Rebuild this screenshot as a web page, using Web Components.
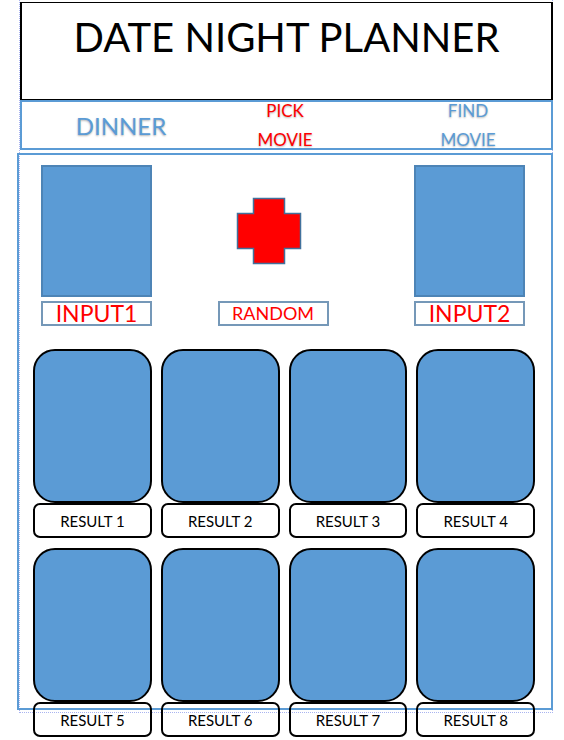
<!DOCTYPE html>
<html lang="en">
<head>
<meta charset="utf-8">
<meta name="viewport" content="width=device-width, initial-scale=1">
<title>Date Night Planner</title>
<style>
  body {
    margin: 0;
    background: #fff;
    color: #000;
    font-family: Lato, "Open Sans", sans-serif;
    --blue: #5b9bd5;
    --outline: #41719c;
    --red: #ff0000;
  }
</style>
</head>
<body>
<date-planner>
  <planner-title slot="title">DATE NIGHT PLANNER</planner-title>
  <planner-nav slot="nav">
    <nav-link size="large">DINNER</nav-link>
    <nav-link active>PICK<br>MOVIE</nav-link>
    <nav-link>FIND<br>MOVIE</nav-link>
  </planner-nav>
  <planner-panel>
    <picker-row>
      <picker-tile slot="first">INPUT1</picker-tile>
      <picker-tile slot="random" shape="cross">RANDOM</picker-tile>
      <picker-tile slot="second">INPUT2</picker-tile>
    </picker-row>
    <result-grid>
      <result-card>RESULT 1</result-card>
      <result-card>RESULT 2</result-card>
      <result-card>RESULT 3</result-card>
      <result-card>RESULT 4</result-card>
      <result-card>RESULT 5</result-card>
      <result-card>RESULT 6</result-card>
      <result-card>RESULT 7</result-card>
      <result-card>RESULT 8</result-card>
    </result-grid>
  </planner-panel>
</date-planner>
<script>
  function define(name, markup) {
    const template = document.createElement('template');
    template.innerHTML = markup;
    customElements.define(name, class extends HTMLElement {
      constructor() {
        super();
        this.attachShadow({ mode: 'open' }).append(template.content.cloneNode(true));
      }
    });
  }

  define('date-planner', `
    <style>
      :host { display: block; padding: 2px 11px 27px 17px; }
      .page { position: relative; }
      .top { margin-left: 3px; }
      /* dotted margin guide behind the page */
      .guide {
        position: absolute; inset: -2px 0 -3px 2px;
        border: 1px dotted #a9b4f0; border-top: 0;
        pointer-events: none;
      }
      main { position: relative; margin-top: 3px; }
    </style>
    <div class="page">
      <div class="guide"></div>
      <div class="top"><slot name="title"></slot><slot name="nav"></slot></div>
      <main><slot></slot></main>
    </div>`);

  define('planner-title', `
    <style>
      :host { display: block; position: relative; }
      header {
        border: 2px solid #000; border-width: 1px 2px 2px;
        padding: 8px 8px 36px; background: #fff; text-align: center;
      }
      h1 { margin: 0; font-size: 40px; line-height: 52px; font-weight: 400; }
    </style>
    <header><h1><slot></slot></h1></header>`);

  define('planner-nav', `
    <style>
      :host { display: block; position: relative; margin-top: -1px; }
      nav {
        display: grid; grid-template-columns: 164fr 164fr 18fr 166fr; align-items: center;
        padding-left: 17px; border: 2px solid var(--blue); background: #fff;
      }
      ::slotted(:last-child) { grid-column: 4; }
    </style>
    <nav><slot></slot></nav>`);

  define('nav-link', `
    <style>
      :host { display: block; margin: -6px 0; text-align: center; }
      a {
        color: var(--blue); text-decoration: none;
        font-size: 17px; line-height: 29px;
        text-shadow: 0 1px 2px rgba(0, 0, 0, .3);
      }
      :host([active]) a { color: var(--red); }
      :host([size="large"]) a { font-size: 24px; }
    </style>
    <a href="#"><slot></slot></a>`);

  define('planner-panel', `
    <style>
      :host {
        display: block; border: 2px solid var(--blue);
        padding: 10px 16px 0 14px;
      }
    </style>
    <slot></slot>`);

  define('picker-row', `
    <style>
      :host {
        display: grid; grid-template-columns: 111px 66fr 111px 86fr 111px;
        padding: 0 10px 0 8px;
      }
      slot[name="random"] { display: block; grid-column: 3; }
      slot[name="second"] { display: block; grid-column: 5; }
    </style>
    <slot name="first"></slot><slot name="random"></slot><slot name="second"></slot>`);

  define('picker-tile', `
    <style>
      :host { display: block; }
      button {
        display: grid; gap: 4px; width: 100%; padding: 0; border: 0;
        background: none; font: inherit; cursor: pointer;
      }
      .art {
        display: block; height: 132px; box-sizing: border-box;
        background: var(--blue); border: 2px solid #4d84b6;
      }
      .label {
        border: 2px solid #7598b8; color: var(--red);
        font-size: 23px; line-height: 21px;
      }
      svg { display: none; }
      :host([shape="cross"]) .art { display: none; }
      :host([shape="cross"]) svg { display: block; }
      :host([shape="cross"]) .label { font-size: 18px; }
    </style>
    <button type="button">
      <span class="art"></span>
      <svg width="110" height="132" viewBox="0 0 110 132" aria-hidden="true">
        <path d="M35.5 33.5h31v15h16v35h-16v15h-31v-15h-16v-35h16z" fill="#f00" stroke="#41719c" stroke-width="1.5"/>
      </svg>
      <span class="label"><slot></slot></span>
    </button>`);

  define('result-grid', `
    <style>
      :host {
        display: grid; grid-template-columns: repeat(4, 1fr); gap: 10px 9px;
        margin: 23px 0 -29px;
      }
    </style>
    <slot></slot>`);

  define('result-card', `
    <style>
      :host { display: block; }
      figure { margin: 0; }
      .art {
        height: 150px; border: 2px solid #000; border-radius: 22px;
        background: var(--blue);
      }
      figcaption {
        border: 2px solid #000; border-radius: 7px; text-align: center;
        font-size: 15px; line-height: 29px; padding-top: 2px;
      }
    </style>
    <figure>
      <div class="art"></div>
      <figcaption><slot></slot></figcaption>
    </figure>`);
</script>
</body>
</html>
